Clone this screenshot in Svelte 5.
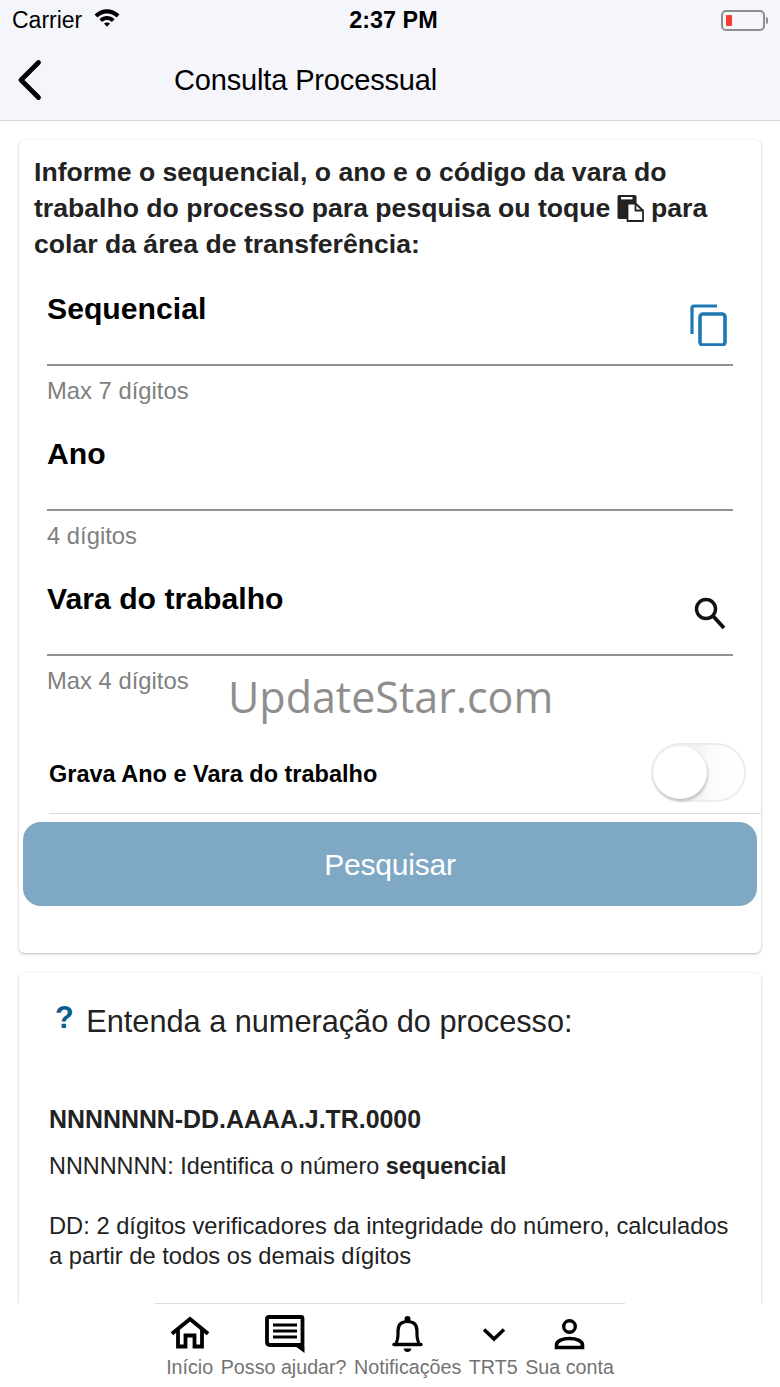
<script>
	const tabs = [
		{ label: 'Início', icon: 'home' },
		{ label: 'Posso ajudar?', icon: 'chat' },
		{ label: 'Notificações', icon: 'bell' },
		{ label: 'TRT5', icon: 'chevron' },
		{ label: 'Sua conta', icon: 'user' }
	];
</script>

<div class="page">
	<header class="top">
		<div class="status">
			<div class="carrier">
				<span>Carrier</span>
				<svg width="26" height="20" viewBox="0 0 26 20">
					<path d="M0.500 7.500C8 0.500 18 0.500 25.500 7.500L22.600 10.400C16.800 5.200 9.200 5.200 3.400 10.400Z" fill="#000" />
					<path d="M5.400 12.300C10 8 16 8 20.600 12.300L17.800 15C14.800 12.400 11.200 12.400 8.200 15Z" fill="#000" />
					<path d="M10 16.600C11.800 15.200 14.200 15.200 16 16.600L13 19.700Z" fill="#000" />
				</svg>
			</div>
			<div class="clock">2:37 PM</div>
			<div class="battery">
				<div class="battery-body"><div class="battery-level"></div></div>
				<div class="battery-cap"></div>
			</div>
		</div>
		<div class="nav">
			<svg class="back" width="32" height="42" viewBox="0 0 32 42">
				<path d="M26.500 3.500L9 21L26.500 38.500" fill="none" stroke="#000" stroke-width="4.800" stroke-linecap="round" stroke-linejoin="round" />
			</svg>
			<h1>Consulta Processual</h1>
		</div>
	</header>

	<main class="content">
		<section class="card form-card">
			<p class="intro">
				Informe o sequencial, o ano e o código da vara do trabalho do processo para pesquisa ou toque
				<svg class="paste" width="28" height="28" viewBox="0 0 28 28">
					<path d="M1.500 2.500Q1.500 1 3 1H19Q20.500 1 20.500 2.500V9H12V25H3Q1.500 25 1.500 23.500Z" fill="#222" />
					<rect x="5" y="3" width="11.500" height="2.400" fill="#fff" />
					<path d="M11.500 9.500H19.500L27 16.500V27H11.500Z" fill="#fff" stroke="#222" stroke-width="1.800" stroke-linejoin="round" />
					<path d="M19.500 9.500V16.500H27" fill="none" stroke="#222" stroke-width="1.800" />
				</svg>
				para colar da área de transferência:
			</p>

			<div class="field first">
				<div class="field-row">
					<span class="field-label">Sequencial</span>
					<svg class="field-icon copy" width="38" height="42" viewBox="0 0 38 42">
						<path d="M2 30V4Q2 2 4 2H27" fill="none" stroke="#1f78b4" stroke-width="3.200" />
						<rect x="10" y="10" width="25" height="31" rx="3" fill="none" stroke="#1f78b4" stroke-width="3.600" />
					</svg>
				</div>
				<div class="hint">Max 7 dígitos</div>
			</div>

			<div class="field">
				<div class="field-row">
					<span class="field-label">Ano</span>
				</div>
				<div class="hint">4 dígitos</div>
			</div>

			<div class="field">
				<div class="field-row">
					<span class="field-label">Vara do trabalho</span>
					<svg class="field-icon search" width="36" height="36" viewBox="0 0 36 36">
						<circle cx="14" cy="13" r="9.500" fill="none" stroke="#111" stroke-width="3.400" />
						<path d="M21 20L32 32" fill="none" stroke="#111" stroke-width="3.800" />
					</svg>
				</div>
				<div class="hint">Max 4 dígitos</div>
			</div>

			<div class="toggle-row">
				<span>Grava Ano e Vara do trabalho</span>
				<div class="switch"><div class="knob"></div></div>
			</div>

			<button class="search-button" type="button">Pesquisar</button>
		</section>

		<section class="card help-card">
			<h2><span class="question">?</span> Entenda a numeração do processo:</h2>
			<p class="mask">NNNNNNN-DD.AAAA.J.TR.0000</p>
			<p class="line">NNNNNNN: Identifica o número <b>sequencial</b></p>
			<p class="line wide">DD: 2 dígitos verificadores da integridade do número, calculados a partir de todos os demais dígitos</p>
		</section>
	</main>

	<nav class="tabbar">
		{#each tabs as tab}
			<div class="tab">
				<svg width="44" height="44" viewBox="0 0 44 44">
					{#if tab.icon === 'home'}
						<path d="M5.500 20.500L22 7L38.500 20.500" fill="none" stroke="#000" stroke-width="4" stroke-linecap="square" />
						<path d="M10 18V34.500H17.500V23.500H26.500V34.500H34V18" fill="none" stroke="#000" stroke-width="3.800" />
					{:else if tab.icon === 'chat'}
						<path d="M7 5H39Q40.500 5 40.500 6.500V33H8Q5 33 5 30V7Q5 5 7 5Z" fill="none" stroke="#000" stroke-width="3.800" stroke-linejoin="round" />
						<path d="M33 34H42.500V41Z" fill="#000" />
						<path d="M11 13H35M11 19H35M11 25H35" stroke="#000" stroke-width="3" />
					{:else if tab.icon === 'bell'}
						<path d="M10 31C12.500 27 12 24 12 19C12 12 16 9.500 21.500 9.500C27 9.500 31 12 31 19C31 24 30.500 27 33 31" fill="none" stroke="#000" stroke-width="3.200" />
						<circle cx="21.500" cy="7" r="3" fill="#000" />
						<path d="M8 32.500H35" stroke="#000" stroke-width="3.400" stroke-linecap="round" />
						<path d="M17.500 36.500H25.500Q24.500 40 21.500 40Q18.500 40 17.500 36.500Z" fill="#000" />
					{:else if tab.icon === 'chevron'}
						<path d="M13 17.500L23 27L33 17.500" fill="none" stroke="#000" stroke-width="3.600" />
					{:else}
						<circle cx="21.500" cy="14.500" r="5.800" fill="none" stroke="#000" stroke-width="3.400" />
						<path d="M8.500 35.500V33C8.500 28.500 15 26.500 21.500 26.500C28 26.500 34.500 28.500 34.500 33V35.500Z" fill="none" stroke="#000" stroke-width="3.600" />
					{/if}
				</svg>
				<span>{tab.label}</span>
			</div>
		{/each}
	</nav>

	<div class="watermark">UpdateStar.com</div>
</div>

<style>
	:global(body) {
		background: #fff;
	}
	.page {
		position: relative;
		display: flex;
		flex-direction: column;
		width: 780px;
		height: 1387px;
		overflow: hidden;
		font-family: 'Liberation Sans', Arial, sans-serif;
		color: #000;
	}
	.top {
		flex: none;
		height: 120px;
		background: #f5f6fb;
		border-bottom: 1px solid #d9d9dc;
		box-sizing: content-box;
	}
	.status {
		display: grid;
		grid-template-columns: 1fr auto 1fr;
		align-items: center;
		height: 40px;
		padding: 0 12px;
	}
	.carrier {
		display: flex;
		align-items: center;
		gap: 12px;
		font-size: 23px;
	}
	.carrier svg {
		margin-top: -6px;
	}
	.clock {
		font-size: 23.400px;
		font-weight: 700;
		margin-left: 7px;
	}
	.battery {
		display: flex;
		align-items: center;
		justify-content: flex-end;
		gap: 1px;
	}
	.battery-body {
		box-sizing: border-box;
		width: 44px;
		height: 21px;
		padding: 3px;
		border: 2px solid #8e8e8e;
		border-radius: 5px;
	}
	.battery-level {
		width: 6px;
		height: 100%;
		background: #f63b30;
		border-radius: 1px;
	}
	.battery-cap {
		width: 2px;
		height: 7px;
		background: #8e8e8e;
		border-radius: 0 2px 2px 0;
	}
	.nav {
		display: flex;
		align-items: center;
		height: 80px;
		padding-left: 12px;
	}
	.back {
		flex: none;
	}
	h1 {
		margin: 0 0 0 130px;
		font-size: 29px;
		font-weight: 400;
		letter-spacing: -0.15px;
	}
	.content {
		flex: 1;
		min-height: 0;
		overflow: hidden;
		padding: 19px 19px 0;
		display: flex;
		flex-direction: column;
		gap: 20px;
	}
	.card {
		flex: none;
		background: #fff;
		border-radius: 6px;
		box-shadow: 0 1px 3px rgba(0, 0, 0, 0.28);
	}
	.form-card {
		box-sizing: border-box;
		height: 813px;
		padding: 14px 4px 0;
	}
	.intro {
		margin: 0 0 0 11px;
		width: 700px;
		font-size: 26.600px;
		font-weight: 700;
		line-height: 36px;
		color: #222;
	}
	.paste {
		vertical-align: -5px;
		margin: 0 0 0 -2px;
	}
	.field {
		margin: 0 0 0 24px;
	}
	.field.first {
		margin-top: 12px;
	}
	.field-row {
		display: flex;
		justify-content: space-between;
		box-sizing: border-box;
		width: 686px;
		height: 92px;
		padding-top: 17px;
		border-bottom: 2px solid #929292;
	}
	.field-label {
		font-size: 30.200px;
		font-weight: 700;
		line-height: 36px;
	}
	.field-icon {
		align-self: flex-end;
	}
	.copy {
		margin: 0 5px 18px 0;
	}
	.search {
		margin: 0 5px 22px 0;
	}
	.hint {
		height: 53px;
		padding-top: 12px;
		box-sizing: border-box;
		font-size: 23.800px;
		line-height: 26px;
		color: #808080;
	}
	.toggle-row {
		display: flex;
		align-items: center;
		justify-content: space-between;
		box-sizing: border-box;
		height: 105px;
		margin-left: 26px;
		margin-right: -4px;
		padding: 26px 15px 0 0;
		border-bottom: 1px solid #dcdcdc;
		font-size: 23.500px;
		font-weight: 700;
	}
	.switch {
		box-sizing: border-box;
		width: 95px;
		height: 59px;
		margin-top: -4px;
		padding: 1px 0;
		border: 2px solid #ececec;
		border-radius: 30px;
		background: linear-gradient(90deg, #f2f2f2 50%, #fbfbfb 62%, #fff 100%);
	}
	.knob {
		width: 54px;
		height: 53px;
		background: #fff;
		border-radius: 50%;
		box-shadow: 1px 2px 3px rgba(0, 0, 0, 0.22);
	}
	.search-button {
		display: block;
		width: 734px;
		height: 84px;
		margin: 8px 0 0;
		padding: 2px 0 0;
		border: 0;
		border-radius: 18px;
		background: #7fa8c5;
		color: #fff;
		font-family: inherit;
		font-size: 30px;
		letter-spacing: -0.2px;
	}
	.help-card {
		padding: 27px 30px 40px;
		height: 420px;
		box-sizing: border-box;
	}
	h2 {
		margin: 0 0 0 6px;
		font-size: 30.700px;
		font-weight: 400;
		line-height: 44px;
		color: #222;
	}
	.question {
		font-weight: 700;
		color: #0b5c8f;
		margin-right: 4px;
		position: relative;
		top: -4px;
	}
	.mask {
		margin: 60px 0 0;
		font-size: 24.900px;
		font-weight: 700;
		line-height: 30px;
		color: #222;
	}
	.line {
		margin: 17px 0 0;
		font-size: 23.400px;
		line-height: 30px;
		color: #222;
	}
	.line + .line {
		margin-top: 30px;
	}
	.line.wide {
		font-size: 23.700px;
	}
	.tabbar {
		flex: none;
		box-sizing: border-box;
		width: 470px;
		height: 84px;
		margin-left: 155px;
		border-top: 1px solid #dcdcdc;
		display: flex;
		justify-content: center;
		gap: 7.500px;
		padding-top: 8px;
	}
	.tab {
		display: flex;
		flex-direction: column;
		align-items: center;
	}
	.tab span {
		font-size: 19.700px;
		color: #737373;
		white-space: nowrap;
	}
	.watermark {
		position: absolute;
		left: 228px;
		top: 667px;
		font-family: 'Open Sans', sans-serif;
		font-size: 43px;
		line-height: 60px;
		color: #8e8e8e;
	}
</style>
